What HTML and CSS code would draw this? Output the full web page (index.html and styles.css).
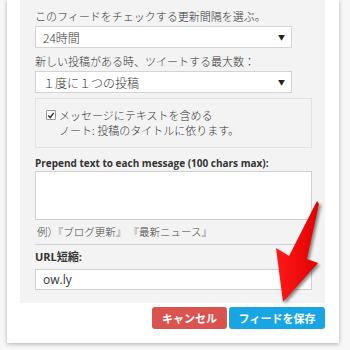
FILE: index.html
```html
<!DOCTYPE html>
<html lang="ja">
<head>
<meta charset="utf-8">
<link rel="stylesheet" href="styles.css">
</head>
<body>
<div class="modal">
  <div class="panel">
    <label class="lbl">このフィードをチェックする更新間隔を選ぶ。</label>
    <div class="select"><span>24時間</span><span class="caret">▼</span></div>
    <label class="lbl">新しい投稿がある時、ツイートする最大数：</label>
    <div class="select"><span>１度に１つの投稿</span><span class="caret">▼</span></div>
    <div class="checkbox-box">
      <div class="check-row">
        <span class="cb"><svg width="9" height="9" viewBox="0 0 9 9"><path d="M1.5 4.5 L3.6 6.8 L7.6 1.5" fill="none" stroke="#333" stroke-width="1.6"/></svg></span>
        <span>メッセージにテキストを含める</span>
      </div>
      <div class="note">ノート: 投稿のタイトルに依ります。</div>
    </div>
    <label class="blbl">Prepend text to each message (100 chars max):</label>
    <div class="textarea"></div>
    <div class="hint">例）『ブログ更新』 『最新ニュース』</div>
    <label class="blbl url">URL短縮:</label>
    <div class="input">ow.ly</div>
  </div>
  <div class="actions">
    <button class="btn cancel">キャンセル</button>
    <button class="btn save">フィードを保存</button>
  </div>
</div>
<svg class="arrow" width="70" height="120" viewBox="265 195 70 120">
  <defs>
    <linearGradient id="ag" x1="0" y1="0" x2="1" y2="0">
      <stop offset="0" stop-color="#ff1a1a"/>
      <stop offset="1" stop-color="#e00000"/>
    </linearGradient>
  </defs>
  <polygon points="317,201 319,204 307,259 318,263 283,302 276,248 289,256" fill="url(#ag)"/>
</svg>
</body>
</html>
```
FILE: styles.css
```css
html, body {
  margin: 0;
  padding: 0;
}
body {
  background: #f7f7f7;
  width: 350px;
  height: 350px;
  overflow: hidden;
  position: relative;
  font-family: "Noto Sans CJK JP", "Noto Sans", sans-serif;
  font-weight: 300;
  color: #333;
}
.modal {
  margin-left: 7px;
  width: 332px;
  height: 343px;
  background: #fff;
  box-shadow: 0 1px 4px rgba(0,0,0,0.3);
  box-sizing: border-box;
  padding: 0 14px 0 13px;
}
.panel {
  background: #f3f3f3;
  height: 303px;
  box-sizing: border-box;
  padding: 8px 13px 0 15px;
  display: flex;
  flex-direction: column;
  align-items: flex-start;
}
.lbl {
  font-size: 11px;
  line-height: 16px;
  height: 18px;
  display: block;
  color: #333;
}
.select {
  width: 257px;
  height: 22px;
  box-sizing: border-box;
  border: 1px solid #d4d4d4;
  background: #fff;
  display: flex;
  align-items: center;
  justify-content: space-between;
  padding: 0 6px 0 7px;
  font-size: 12px;
  margin-bottom: 3px;
}
.select + .lbl {
  margin-top: 2px;
}
.caret {
  font-size: 7px;
  color: #222;
}
.checkbox-box {
  margin-top: 2px;
  width: 277px;
  height: 50px;
  box-sizing: border-box;
  border: 1px solid #e2e2e2;
  padding: 8px 0 0 10px;
  font-size: 11px;
}
.check-row {
  display: flex;
  align-items: center;
  gap: 3px;
  height: 16px;
}
.cb {
  width: 10px;
  height: 10px;
  box-sizing: border-box;
  border: 1px solid #999;
  background: #fff;
  display: inline-flex;
  align-items: center;
  justify-content: center;
  border-radius: 1px;
}
.note {
  padding-left: 13px;
  height: 15px;
  line-height: 15px;
  color: #333;
}
.blbl {
  font-family: "Open Sans", "Noto Sans CJK JP", sans-serif;
  font-weight: bold;
  font-size: 10px;
  line-height: 14px;
  margin-top: 8px;
  height: 15px;
  color: #333;
}
.textarea {
  width: 277px;
  height: 49px;
  box-sizing: border-box;
  border: 1px solid #cfcfcf;
  background: #fff;
}
.hint {
  width: 277px;
  height: 25px;
  box-sizing: border-box;
  border-bottom: 1px solid #d0d0d0;
  font-size: 10.5px;
  line-height: 24px;
  padding-left: 2px;
  color: #444;
}
.blbl.url {
  font-size: 11px;
  margin-top: 4px;
  height: 20px;
  line-height: 16px;
}
.input {
  width: 277px;
  height: 21px;
  box-sizing: border-box;
  border: 1px solid #cfcfcf;
  background: #fff;
  font-family: "Open Sans", sans-serif;
  font-weight: normal;
  font-size: 12px;
  line-height: 19px;
  padding-left: 7px;
}
.actions {
  display: flex;
  justify-content: flex-end;
  gap: 2px;
  padding-top: 4px;
}
.btn {
  height: 22px;
  border: none;
  border-radius: 3px;
  color: #fff;
  font-family: "Noto Sans CJK JP", sans-serif;
  font-weight: bold;
  font-size: 11px;
  padding: 0;
  margin: 0;
}
.cancel {
  width: 75px;
  background: #d9534f;
}
.save {
  width: 96px;
  background: #18a5e3;
}
.arrow {
  position: absolute;
  left: 265px;
  top: 195px;
  filter: drop-shadow(2px 2px 1.5px rgba(0,0,0,0.45));
}
```
